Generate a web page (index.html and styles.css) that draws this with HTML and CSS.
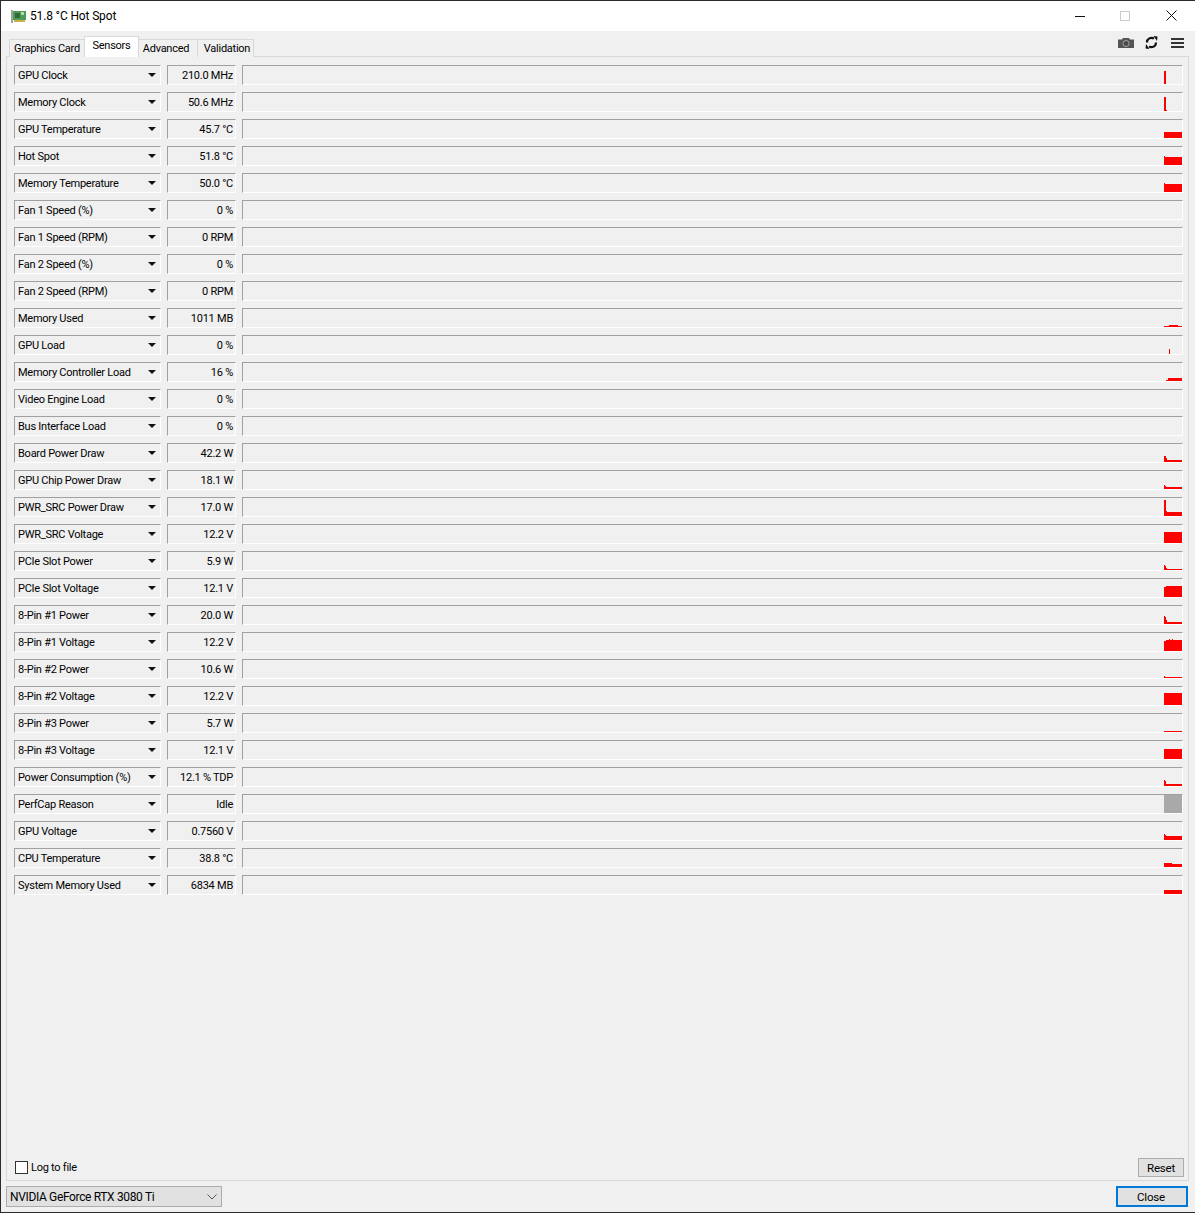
FILE: index.html
```html
<!DOCTYPE html>
<html lang="en">
<head>
    <meta charset="UTF-8">
    <title>51.8 °C Hot Spot</title>
    <link rel="stylesheet" href="styles.css">
</head>
<body>
    <div class="window">
        <header class="titlebar">
            <svg class="app-icon" width="16" height="14" viewBox="0 0 16 14">
                <rect x="0" y="1" width="2" height="13" fill="#9aa59a"/>
                <rect x="2" y="2" width="13" height="9" fill="#4f9a55"/>
                <rect x="4" y="4" width="5" height="5" fill="#2f6b38"/>
                <rect x="10" y="3" width="3" height="3" fill="#b7d8a8"/>
                <rect x="3" y="11" width="11" height="2" fill="#c9b04a"/>
            </svg>
            <span class="title-text">51.8 °C Hot Spot</span>
            <div class="win-buttons">
                <svg width="10" height="10" viewBox="0 0 10 10"><rect x="0" y="5" width="10" height="1" fill="#111"/></svg>
                <svg width="10" height="10" viewBox="0 0 10 10"><rect x="0.5" y="0.5" width="9" height="9" fill="none" stroke="#ccc"/></svg>
                <svg class="win-close" width="11" height="11" viewBox="0 0 11 11"><path d="M0.5 0.5L10.5 10.5M10.5 0.5L0.5 10.5" stroke="#111" fill="none"/></svg>
            </div>
        </header>

        <div class="main">
            <div class="tabbar">
                <nav class="tabs">
                    <a class="tab tab-card">Graphics Card</a>
                    <a class="tab tab-sensors active">Sensors</a>
                    <a class="tab tab-advanced">Advanced</a>
                    <a class="tab tab-validation">Validation</a>
                </nav>
                <div class="tools">
                    <svg class="tool-camera" width="16" height="10" viewBox="0 0 16 10">
                        <path d="M0 1.5H4L5 0H11L12 1.5H16V10H0Z" fill="#555"/>
                        <circle cx="8" cy="5.5" r="3" fill="#4a4a4a" stroke="#a8a8a8"/>
                    </svg>
                    <svg width="13" height="13" viewBox="0 0 13 13">
                        <path d="M2 6.5A4.5 4.5 0 0 1 9 2.6M11 6.5A4.5 4.5 0 0 1 4 10.4" fill="none" stroke="#111" stroke-width="2.2"/>
                        <path d="M8.5 0L12.5 0.5L12 5ZM4.5 13L0.5 12.5L1 8Z" fill="#111"/>
                    </svg>
                    <svg width="13" height="10" viewBox="0 0 13 10">
                        <path d="M0 0H13V2H0ZM0 4H13V6H0ZM0 8H13V10H0Z" fill="#333"/>
                    </svg>
                </div>
            </div>

            <section class="panel">
                <div class="rows">
                    <div class="row"><div class="name">GPU Clock<i class="arrow"></i></div><div class="value">210.0 MHz</div><div class="graph"><svg class="trace" viewBox="0 0 18 18"><path d="M0 18V5H2V18Z"/></svg></div></div>
                    <div class="row"><div class="name">Memory Clock<i class="arrow"></i></div><div class="value">50.6 MHz</div><div class="graph"><svg class="trace" viewBox="0 0 18 18"><path d="M0 18V4H2V17H3V18Z"/></svg></div></div>
                    <div class="row"><div class="name">GPU Temperature<i class="arrow"></i></div><div class="value">45.7 °C</div><div class="graph"><svg class="trace" viewBox="0 0 18 18"><path d="M0 18V12H18V18Z"/></svg></div></div>
                    <div class="row"><div class="name">Hot Spot<i class="arrow"></i></div><div class="value">51.8 °C</div><div class="graph"><svg class="trace" viewBox="0 0 18 18"><path d="M0 18V9H1V10H18V18Z"/></svg></div></div>
                    <div class="row"><div class="name">Memory Temperature<i class="arrow"></i></div><div class="value">50.0 °C</div><div class="graph"><svg class="trace" viewBox="0 0 18 18"><path d="M0 18V9H1V10H18V18Z"/></svg></div></div>
                    <div class="row"><div class="name">Fan 1 Speed (%)<i class="arrow"></i></div><div class="value">0 %</div><div class="graph"></div></div>
                    <div class="row"><div class="name">Fan 1 Speed (RPM)<i class="arrow"></i></div><div class="value">0 RPM</div><div class="graph"></div></div>
                    <div class="row"><div class="name">Fan 2 Speed (%)<i class="arrow"></i></div><div class="value">0 %</div><div class="graph"></div></div>
                    <div class="row"><div class="name">Fan 2 Speed (RPM)<i class="arrow"></i></div><div class="value">0 RPM</div><div class="graph"></div></div>
                    <div class="row"><div class="name">Memory Used<i class="arrow"></i></div><div class="value">1011 MB</div><div class="graph"><svg class="trace" viewBox="0 0 18 18"><path d="M0 18V17H5V16H14V17H18V18Z"/></svg></div></div>
                    <div class="row"><div class="name">GPU Load<i class="arrow"></i></div><div class="value">0 %</div><div class="graph"><svg class="trace" viewBox="0 0 18 18"><path d="M5 18V13H6V18Z"/></svg></div></div>
                    <div class="row"><div class="name">Memory Controller Load<i class="arrow"></i></div><div class="value">16 %</div><div class="graph"><svg class="trace" viewBox="0 0 18 18"><path d="M2 18V17H4V15H18V18Z"/></svg></div></div>
                    <div class="row"><div class="name">Video Engine Load<i class="arrow"></i></div><div class="value">0 %</div><div class="graph"></div></div>
                    <div class="row"><div class="name">Bus Interface Load<i class="arrow"></i></div><div class="value">0 %</div><div class="graph"></div></div>
                    <div class="row"><div class="name">Board Power Draw<i class="arrow"></i></div><div class="value">42.2 W</div><div class="graph"><svg class="trace" viewBox="0 0 18 18"><path d="M0 18V12H2V14H3V16H18V18Z"/></svg></div></div>
                    <div class="row"><div class="name">GPU Chip Power Draw<i class="arrow"></i></div><div class="value">18.1 W</div><div class="graph"><svg class="trace" viewBox="0 0 18 18"><path d="M0 18V14H1V15H2V16H18V18Z"/></svg></div></div>
                    <div class="row"><div class="name">PWR_SRC Power Draw<i class="arrow"></i></div><div class="value">17.0 W</div><div class="graph"><svg class="trace" viewBox="0 0 18 18"><path d="M0 18V2H2V13H3V14H18V18Z"/></svg></div></div>
                    <div class="row"><div class="name">PWR_SRC Voltage<i class="arrow"></i></div><div class="value">12.2 V</div><div class="graph"><svg class="trace" viewBox="0 0 18 18"><path d="M0 18V7H18V18Z"/></svg></div></div>
                    <div class="row"><div class="name">PCIe Slot Power<i class="arrow"></i></div><div class="value">5.9 W</div><div class="graph"><svg class="trace" viewBox="0 0 18 18"><path d="M0 18V13H1V14H2V16H3V17H18V18Z"/></svg></div></div>
                    <div class="row"><div class="name">PCIe Slot Voltage<i class="arrow"></i></div><div class="value">12.1 V</div><div class="graph"><svg class="trace" viewBox="0 0 18 18"><path d="M0 18V8H2V7H18V18Z"/></svg></div></div>
                    <div class="row"><div class="name">8-Pin #1 Power<i class="arrow"></i></div><div class="value">20.0 W</div><div class="graph"><svg class="trace" viewBox="0 0 18 18"><path d="M0 18V10H1V11H2V14H3V16H18V18Z"/></svg></div></div>
                    <div class="row"><div class="name">8-Pin #1 Voltage<i class="arrow"></i></div><div class="value">12.2 V</div><div class="graph"><svg class="trace" viewBox="0 0 18 18"><path d="M0 18V8H2V7H5V6H6V7H8V6H9V7H18V18Z"/></svg></div></div>
                    <div class="row"><div class="name">8-Pin #2 Power<i class="arrow"></i></div><div class="value">10.6 W</div><div class="graph"><svg class="trace" viewBox="0 0 18 18"><path d="M0 18V16H1V17H18V18Z"/></svg></div></div>
                    <div class="row"><div class="name">8-Pin #2 Voltage<i class="arrow"></i></div><div class="value">12.2 V</div><div class="graph"><svg class="trace" viewBox="0 0 18 18"><path d="M0 18V6H18V18Z"/></svg></div></div>
                    <div class="row"><div class="name">8-Pin #3 Power<i class="arrow"></i></div><div class="value">5.7 W</div><div class="graph"><svg class="trace" viewBox="0 0 18 18"><path d="M0 18V17H18V18Z"/></svg></div></div>
                    <div class="row"><div class="name">8-Pin #3 Voltage<i class="arrow"></i></div><div class="value">12.1 V</div><div class="graph"><svg class="trace" viewBox="0 0 18 18"><path d="M0 18V8H18V18Z"/></svg></div></div>
                    <div class="row"><div class="name">Power Consumption (%)<i class="arrow"></i></div><div class="value">12.1 % TDP</div><div class="graph"><svg class="trace" viewBox="0 0 18 18"><path d="M0 18V12H1V13H2V16H18V18Z"/></svg></div></div>
                    <div class="row"><div class="name">PerfCap Reason<i class="arrow"></i></div><div class="value">Idle</div><div class="graph"><svg class="trace idle" viewBox="0 0 18 18"><path d="M0 18V0H18V18Z"/></svg></div></div>
                    <div class="row"><div class="name">GPU Voltage<i class="arrow"></i></div><div class="value">0.7560 V</div><div class="graph"><svg class="trace" viewBox="0 0 18 18"><path d="M0 18V12H1V13H2V14H18V18Z"/></svg></div></div>
                    <div class="row"><div class="name">CPU Temperature<i class="arrow"></i></div><div class="value">38.8 °C</div><div class="graph"><svg class="trace" viewBox="0 0 18 18"><path d="M0 18V14H8V15H18V18Z"/></svg></div></div>
                    <div class="row"><div class="name">System Memory Used<i class="arrow"></i></div><div class="value">6834 MB</div><div class="graph"><svg class="trace" viewBox="0 0 18 18"><path d="M0 18V14H18V18Z"/></svg></div></div>
                </div>

                <div class="panel-foot">
                    <label class="log-check"><span class="checkbox"></span>Log to file</label>
                    <button class="btn reset-btn">Reset</button>
                </div>
            </section>

            <footer class="footer">
                <div class="gpu-select">NVIDIA GeForce RTX 3080 Ti
                    <svg width="10" height="6" viewBox="0 0 10 6"><path d="M0.5 0.5L5 5L9.5 0.5" fill="none" stroke="#555"/></svg>
                </div>
                <button class="btn close-btn">Close</button>
            </footer>
        </div>
    </div>
</body>
</html>
```

FILE: styles.css
```css
* {
    margin: 0;
    padding: 0;
    box-sizing: border-box;
}

html, body {
    height: 100%;
}

body {
    font-family: Roboto, sans-serif;
    font-size: 11px;
    letter-spacing: -0.25px;
    color: #000;
    background: #f0f0f0;
    overflow: hidden;
}

.window {
    height: 1213px;
    display: flex;
    flex-direction: column;
    border-top: 1px solid #2b2b2b;
    border-left: 1px solid #2b2b2b;
    border-bottom: 1px solid #2b2b2b;
}

.titlebar {
    height: 30px;
    flex: none;
    background: #fff;
    display: flex;
    align-items: center;
    padding: 0 0 1px 10px;
}

.app-icon {
    margin-right: 3px;
}

.title-text {
    font-size: 12px;
    letter-spacing: -0.15px;
    flex: 1;
}

.win-buttons {
    display: flex;
    align-items: center;
    gap: 35px;
    padding-right: 18px;
}

.win-close {
    margin-left: 1px;
}

.main {
    flex: 1;
    display: flex;
    flex-direction: column;
    padding: 0 6px 0 5px;
    min-height: 0;
}

.tabbar {
    height: 26px;
    flex: none;
    display: flex;
    justify-content: space-between;
    align-items: flex-end;
    margin-bottom: -1px;
    position: relative;
    z-index: 1;
}

.tabs {
    display: flex;
    align-items: flex-end;
    padding-left: 4px;
}

.tab {
    height: 18px;
    display: flex;
    align-items: center;
    justify-content: center;
    background: #f0f0f0;
    border: 1px solid #d9d9d9;
    border-bottom: none;
    margin-left: -1px;
}

.tab-card {
    width: 76px;
}

.tab-sensors {
    width: 55px;
}

.tab-advanced {
    width: 60px;
    padding-right: 4px;
}

.tab-validation {
    width: 57px;
    padding-left: 3px;
}

.tab.active {
    height: 21px;
    background: #fff;
    padding-bottom: 3px;
    position: relative;
}

.tools {
    display: flex;
    align-items: center;
    gap: 13px;
    padding: 0 5px 8px 0;
}

.tool-camera {
    margin-right: -2px;
}

.panel {
    flex: 1;
    display: flex;
    flex-direction: column;
    border: 1px solid #d9d9d9;
    background: #f0f0f0;
    min-height: 0;
}

.rows {
    flex: 1;
    display: flex;
    flex-direction: column;
    gap: 7px;
    padding: 8px 5px 0 7px;
}

.row {
    display: flex;
    gap: 6px;
    height: 20px;
}

.name, .value, .graph {
    border-top: 1px solid #a0a0a0;
    border-left: 1px solid #a0a0a0;
    border-right: 1px solid #fff;
    border-bottom: 1px solid #fff;
    background: #f0f0f0;
}

.name {
    width: 147px;
    display: flex;
    align-items: center;
    justify-content: space-between;
    padding: 0 4px 0 3px;
}

.arrow {
    width: 0;
    height: 0;
    border-left: 4px solid transparent;
    border-right: 4px solid transparent;
    border-top: 4px solid #111;
}

.value {
    width: 69px;
    display: flex;
    align-items: center;
    justify-content: flex-end;
    padding: 0 2px 0 0;
}

.graph {
    flex: 1;
    display: flex;
    justify-content: flex-end;
}

.trace {
    width: 18px;
    height: 18px;
    fill: #f00;
    shape-rendering: crispEdges;
}

.trace.idle {
    fill: #a9a9a9;
}

.panel-foot {
    flex: none;
    display: flex;
    justify-content: space-between;
    align-items: center;
    padding: 0 4px 3px 8px;
}

.log-check {
    display: flex;
    align-items: center;
    gap: 3px;
}

.checkbox {
    width: 13px;
    height: 13px;
    background: #fff;
    border: 1px solid #333;
}

.btn {
    font: inherit;
    font-size: 11.5px;
    letter-spacing: -0.2px;
    color: #000;
    background: #e1e1e1;
    border: 1px solid #adadad;
}

.reset-btn {
    width: 46px;
    height: 19px;
}

.footer {
    flex: none;
    height: 31px;
    display: flex;
    justify-content: space-between;
    align-items: flex-start;
    padding-top: 5px;
}

.gpu-select {
    width: 216px;
    height: 21px;
    display: flex;
    align-items: center;
    justify-content: space-between;
    padding: 0 4px 0 3px;
    font-size: 12px;
    letter-spacing: -0.35px;
    background: #e1e1e1;
    border: 1px solid #adadad;
}

.close-btn {
    width: 72px;
    height: 21px;
    margin-right: 1px;
    padding-right: 2px;
    border: 2px solid #0078d7;
}
```
